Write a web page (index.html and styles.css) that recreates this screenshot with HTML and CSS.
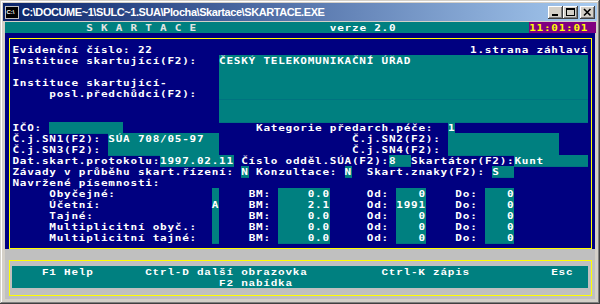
FILE: index.html
```html
<!DOCTYPE html>
<html lang="cs">
<head>
    <meta charset="UTF-8">
    <title>SKARTACE</title>
    <link rel="stylesheet" href="styles.css">
</head>
<body>
    <div class="window">
        <div class="titlebar">
            <svg class="app-icon" width="14" height="13" viewBox="0 0 14 13">
                <rect x="0.5" y="0.5" width="13" height="12" fill="#000" stroke="#c0c0c0"/>
                <text x="1.5" y="7.5" font-family="Liberation Sans, sans-serif" font-size="6" font-weight="bold" fill="#fff">C:\</text>
            </svg>
            <span class="title">C:\DOCUME~1\SULC~1.SUA\Plocha\Skartace\SKARTACE.EXE</span>
            <div class="buttons">
                <span class="btn"><svg width="15" height="13" viewBox="0 0 15 13"><rect x="4" y="8" width="6" height="2" fill="#000"/></svg></span>
                <span class="btn"><svg width="15" height="13" viewBox="0 0 15 13"><rect x="3.5" y="2.5" width="8" height="7" fill="none" stroke="#000"/><rect x="3" y="2" width="9" height="2" fill="#000"/></svg></span>
                <span class="btn close"><svg width="15" height="13" viewBox="0 0 15 13"><path d="M4 3 L10.5 9.5 M10.5 3 L4 9.5" stroke="#000" stroke-width="1.6"/></svg></span>
            </div>
        </div>
        <div class="client">
            <div class="console">
                <div class="head">
                    <div class="ln">           <span class="brand">S K A R T A C E</span>                  verze 2.0                  <span class="clock">11:01:01 </span></div>
                </div>

                <div class="panel">
                    <div class="frame">
                        <div class="ln">Evidenční číslo: 22                                           1.strana záhlaví</div>
                        <div class="ln">Instituce skartující(F2):   <span class="fld">ČESKÝ TELEKOMUNIKAČNÍ ÚŘAD                        </span></div>
                        <div class="ln">                            <span class="fld">                                                  </span></div>
                        <div class="ln">Instituce skartující-       <span class="fld">                                                  </span></div>
                        <div class="ln">     posl.předchůdci(F2):   <span class="fld">                                                  </span></div>
                        <div class="ln">                            <span class="fld">                                                  </span></div>
                        <div class="ln">                            <span class="fld">                                                  </span></div>
                        <div class="ln">IČO: <span class="fld">          </span>                  Kategorie předarch.péče:  <span class="fld">1</span></div>
                        <div class="ln">Č.j.SN1(F2): <span class="fld">SÚA 708/05-97  </span>                  Č.j.SN2(F2): <span class="fld">               </span></div>
                        <div class="ln">Č.j.SN3(F2): <span class="fld">               </span>                  Č.j.SN4(F2): <span class="fld">               </span></div>
                        <div class="ln">Dat.skart.protokolu:<span class="fld">1997.02.11</span> Číslo odděl.SÚA(F2):<span class="fld">8  </span>Skartátor(F2):<span class="fld">Kunt      </span></div>
                        <div class="ln">Závady v průběhu skart.řízení: <span class="fld">N</span> Konzultace: <span class="fld">N</span>  Skart.znaky(F2): <span class="fld">S  </span></div>
                        <div class="ln">Navržené písemnosti:</div>
                        <div class="ln">     Obyčejné:             <span class="fld"> </span>    BM: <span class="fld">    0.0</span>     Od: <span class="fld">   0</span>    Do: <span class="fld">   0</span></div>
                        <div class="ln">     Účetní:               <span class="fld">A</span>    BM: <span class="fld">    2.1</span>     Od: <span class="fld">1991</span>    Do: <span class="fld">   0</span></div>
                        <div class="ln">     Tajné:                <span class="fld"> </span>    BM: <span class="fld">    0.0</span>     Od: <span class="fld">   0</span>    Do: <span class="fld">   0</span></div>
                        <div class="ln">     Multiplicitní obyč.:  <span class="fld"> </span>    BM: <span class="fld">    0.0</span>     Od: <span class="fld">   0</span>    Do: <span class="fld">   0</span></div>
                        <div class="ln">     Multiplicitní tajné:  <span class="fld"> </span>    BM: <span class="fld">    0.0</span>     Od: <span class="fld">   0</span>    Do: <span class="fld">   0</span></div>
                    </div>
                </div>

                <div class="footer">
                    <div class="frame">
                        <div class="keys">
                            <div class="ln">    F1 Help       Ctrl-D další obrazovka          Ctrl-K zápis           Esc</div>
                            <div class="ln">                            F2 nabídka</div>
                        </div>
                    </div>
                </div>
            </div>
        </div>
    </div>
</body>
</html>
```

FILE: styles.css
```css
* {
    box-sizing: border-box;
}

body {
    margin: 0;
    background-color: #d4d0c8;
}

.window {
    width: 600px;
    height: 304px;
    padding: 3px;
    background-color: #d4d0c8;
    box-shadow: inset -1px -1px #404040, inset 1px 1px #d4d0c8, inset -2px -2px #808080, inset 2px 2px #fff;
    overflow: hidden;
}

/* title bar */

.titlebar {
    display: flex;
    align-items: center;
    height: 18px;
    padding: 0 2px;
    background: linear-gradient(to right, #0a246a, #a6caf0);
}

.app-icon {
    flex: none;
    margin-right: 3px;
}

.title {
    flex: 1;
    color: #fff;
    font: bold 11px "Liberation Sans", Arial, sans-serif;
    letter-spacing: -0.43px;
    white-space: nowrap;
    overflow: hidden;
}

.buttons {
    display: flex;
}

.btn {
    display: flex;
    width: 15px;
    height: 13px;
    background-color: #d4d0c8;
    box-shadow: inset -1px -1px #404040, inset 1px 1px #fff, inset -2px -2px #808080;
}

.btn.close {
    margin-left: 2px;
}

/* console screen, 80 x 25 cells of 7.38 x 11.08 px */

.client {
    padding: 1px 0 0 2px;
}

.console {
    width: 590.4px;
    color: #fff;
    font: bold 11px "DejaVu Sans Mono", monospace;
    letter-spacing: 0.76px;
}

/* the VGA font is squat: glyphs are squeezed to the cell height */
.ln {
    height: 11.08px;
    line-height: 13.6px;
    white-space: pre;
    transform: scaleY(0.85);
    transform-origin: top;
}

.head {
    background-color: #008080;
}

.brand {
    color: #e4e4e4;
}

/* taller than the cell so stacked fields join without seams */
.clock,
.fld {
    display: inline-block;
    height: 14px;
    vertical-align: top;
}

.clock {
    height: 13.04px;
    background-color: #800080;
    color: #ffff00;
}

.fld {
    background-color: #008080;
}

.panel {
    padding: 4.92px 3.5px 0;
    background-color: #000080;
}

.frame {
    border: 1px solid #ffff00;
    padding: 5.16px 2.88px 4.4px;
}

.footer {
    height: 50px;
    padding: 11.5px 3.5px 0;
    background-color: #c0c0c0;
}

.footer .frame {
    padding: 4.26px 2.88px 7.58px;
}

.keys {
    background-color: #008080;
    font: bold 11px "Liberation Mono", monospace;
    letter-spacing: 0.78px;
}

.keys .ln {
    line-height: 16px;
}
```
